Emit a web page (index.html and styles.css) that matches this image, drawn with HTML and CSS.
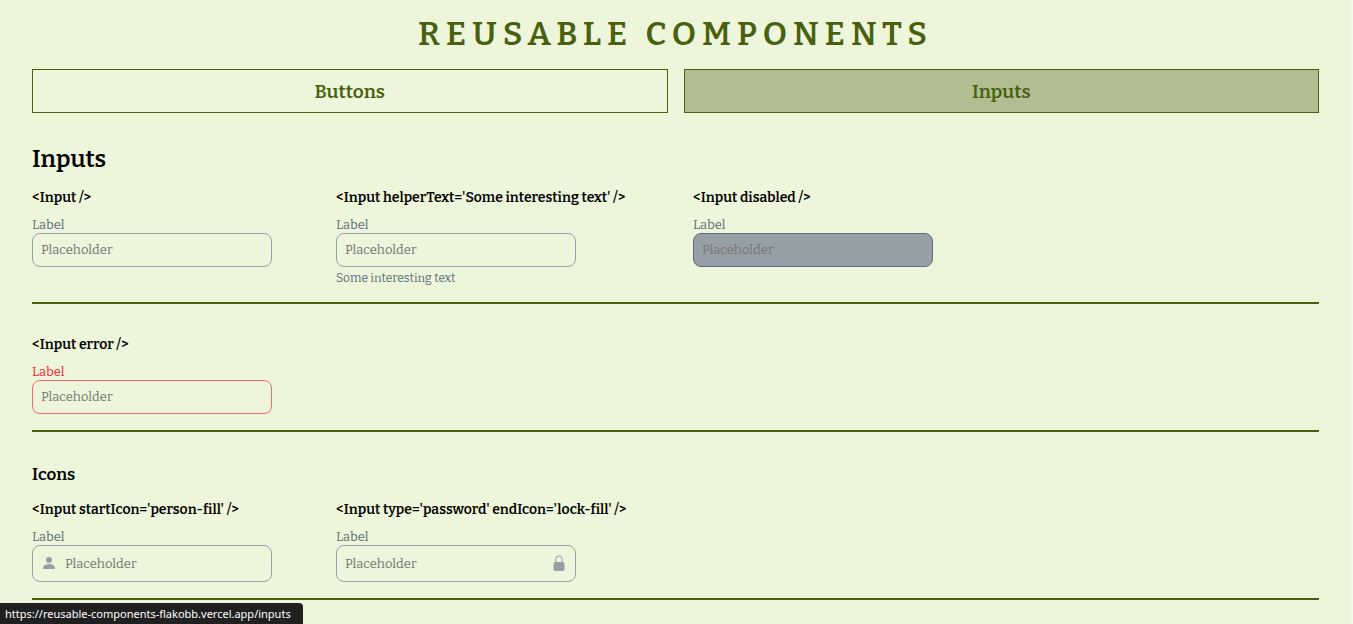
FILE: index.html
```
<!DOCTYPE html>
<html lang="en">
<head>
<meta charset="utf-8">
<meta name="viewport" content="width=device-width, initial-scale=1">
<title>Reusable Components</title>
<link rel="stylesheet" href="styles.css">
</head>
<body>
<div class="page">
  <h1 class="title">REUSABLE COMPONENTS</h1>
  <nav class="tabs">
    <a class="tab" href="#buttons">Buttons</a>
    <a class="tab tab-active" href="#inputs">Inputs</a>
  </nav>
  <main>
    <section class="group">
      <h2 class="heading">Inputs</h2>
      <div class="row">
        <div class="demo">
          <h4 class="code">&lt;Input /&gt;</h4>
          <label class="label" for="basic">Label</label>
          <div class="field"><input class="input" id="basic" type="text" placeholder="Placeholder"></div>
        </div>
        <div class="demo">
          <h4 class="code">&lt;Input helperText='Some interesting text' /&gt;</h4>
          <label class="label" for="helped">Label</label>
          <div class="field"><input class="input" id="helped" type="text" placeholder="Placeholder" aria-describedby="help"></div>
          <p class="helper" id="help">Some interesting text</p>
        </div>
        <div class="demo">
          <h4 class="code">&lt;Input disabled /&gt;</h4>
          <label class="label" for="off">Label</label>
          <div class="field field-disabled"><input class="input" id="off" type="text" placeholder="Placeholder" disabled></div>
        </div>
      </div>
    </section>
    <section class="group">
      <div class="row">
        <div class="demo">
          <h4 class="code">&lt;Input error /&gt;</h4>
          <label class="label label-error" for="bad">Label</label>
          <div class="field field-error"><input class="input" id="bad" type="text" placeholder="Placeholder" aria-invalid="true"></div>
        </div>
      </div>
    </section>
    <section class="group">
      <h3 class="subheading">Icons</h3>
      <div class="row">
        <div class="demo">
          <h4 class="code">&lt;Input startIcon='person-fill' /&gt;</h4>
          <label class="label" for="user">Label</label>
          <div class="field field-icon">
            <svg class="icon" viewBox="0 0 16 16" aria-hidden="true"><path d="M3 14s-1 0-1-1 1-4 6-4 6 3 6 4-1 1-1 1H3zm5-6a3 3 0 1 0 0-6 3 3 0 0 0 0 6z"/></svg>
            <input class="input" id="user" type="text" placeholder="Placeholder">
          </div>
        </div>
        <div class="demo">
          <h4 class="code">&lt;Input type='password' endIcon='lock-fill' /&gt;</h4>
          <label class="label" for="pass">Label</label>
          <div class="field field-icon">
            <input class="input" id="pass" type="password" placeholder="Placeholder">
            <svg class="icon" viewBox="0 0 16 16" aria-hidden="true"><path d="M2.5 9a2 2 0 0 1 2-2h7a2 2 0 0 1 2 2v5a2 2 0 0 1-2 2h-7a2 2 0 0 1-2-2V9z"/><path d="M4.5 4a3.5 3.5 0 1 1 7 0v3h-1V4a2.5 2.5 0 0 0-5 0v3h-1V4z"/></svg>
          </div>
        </div>
      </div>
    </section>
  </main>
</div>
<div class="status">https://reusable-components-flakobb.vercel.app/inputs</div>
</body>
</html>
```
FILE: styles.css
```
* { box-sizing: border-box; }
h1, h2, h3, h4, p { margin: 0; font-weight: 600; }
body {
  margin: 0;
  background: #edf6da;
  border-right: 2px solid #f4f9e9;
  color: #000;
  font-family: Bitter, "DejaVu Serif Condensed", "DejaVu Serif", serif;
}
.page { padding: 16px 32px 0; min-height: 100vh; }
.title {
  color: #49600f;
  font-size: 33px;
  line-height: 37px;
  letter-spacing: 6px;
  text-align: center;
  margin-bottom: 16px;
}
.tabs { display: grid; grid-template-columns: 1fr 1fr; gap: 16px; margin-bottom: 30px; }
.tab {
  padding-top: 2px;
  border: 1px solid #49600f;
  color: #49600f;
  font-size: 19px;
  font-weight: 600;
  line-height: 40px;
  text-align: center;
  text-decoration: none;
}
.tab-active { background: #b1be92; }
.group { border-bottom: 2px solid #49600f; padding-bottom: 16px; }
.group + .group { padding-top: 30px; }
.heading { font-size: 24px; line-height: 32px; margin-bottom: 12px; }
.subheading { font-size: 17px; line-height: 25px; margin-bottom: 12px; }
.row {
  display: grid;
  grid-template-columns: 240px 293px 240px;
  gap: 64px;
}
.code { font-size: 14px; line-height: 22px; margin-bottom: 8px; white-space: nowrap; }
.label { display: block; color: #5b6c7b; font-size: 13px; line-height: 16px; }
.label-error { color: #f9202e; }
.field {
  display: flex;
  align-items: flex-start;
  gap: 8px;
  width: 240px;
  padding: 7px 8px 8px;
  border: 1px solid #95a0a6;
  border-radius: 8px;
}
.field-icon { padding: 9px 8px; }
.field-disabled { background: #95a0a6; border-color: #5b6c7b; }
.field-error { border-color: #fb6a6a; }
.input {
  flex: 1;
  min-width: 0;
  height: 17px;
  padding: 0;
  border: 0;
  outline: 0;
  background: transparent;
  font-family: inherit;
  font-size: 13px;
}
.input::placeholder { color: #757575; opacity: 1; }
.icon { width: 16px; height: 16px; fill: #95a0a6; }
.helper { color: #5b6c7b; font-size: 12px; font-weight: 400; line-height: 16px; margin-top: 3px; }
.status {
  position: fixed;
  left: 0;
  bottom: 0;
  padding: 0 12px 0 5px;
  border-radius: 0 4px 0 0;
  background: #202020;
  color: #fff;
  font-family: "Noto Sans", sans-serif;
  font-size: 11px;
  line-height: 21px;
}
```
